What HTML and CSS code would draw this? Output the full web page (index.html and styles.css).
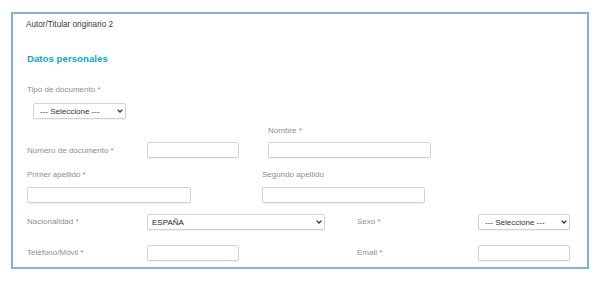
FILE: index.html
```html
<!DOCTYPE html>
<html lang="es">
<head>
<meta charset="utf-8">
<title>Autor/Titular originario 2</title>
<link rel="stylesheet" href="styles.css">
</head>
<body>
<div class="panel">
  <div class="panel-title">Autor/Titular originario 2</div>
  <h2 class="section-title">Datos personales</h2>

  <div class="tipo">
    <label class="lbl">Tipo de documento *</label>
    <div class="sel sel-tipo">
      <select><option>--- Seleccione ---</option></select>
      <svg class="chev" width="6" height="4" viewBox="0 0 6 4"><path d="M0.6 0.6 L3 3 L5.4 0.6" fill="none" stroke="#333" stroke-width="1.3"/></svg>
    </div>
  </div>

  <div class="row row-doc">
    <span></span>
    <span></span>
    <label class="lbl lbl-top">Nombre *</label>
    <label class="lbl lbl-mid">Número de documento *</label>
    <input class="inp w92" type="text">
    <input class="inp w163" type="text">
  </div>

  <div class="row row-ape">
    <label class="lbl lbl-top">Primer apellido *</label>
    <label class="lbl lbl-top">Segundo apellido</label>
    <input class="inp w164" type="text">
    <input class="inp w163" type="text">
  </div>

  <div class="row row-nac">
    <label class="lbl">Nacionalidad *</label>
    <div class="sel w178">
      <select class="sel-dark"><option>ESPAÑA</option></select>
      <svg class="chev" width="6" height="4" viewBox="0 0 6 4"><path d="M0.6 0.6 L3 3 L5.4 0.6" fill="none" stroke="#333" stroke-width="1.3"/></svg>
    </div>
    <label class="lbl">Sexo *</label>
    <div class="sel w92">
      <select class="sel-pad"><option>--- Seleccione ---</option></select>
      <svg class="chev" width="6" height="4" viewBox="0 0 6 4"><path d="M0.6 0.6 L3 3 L5.4 0.6" fill="none" stroke="#333" stroke-width="1.3"/></svg>
    </div>
  </div>

  <div class="row row-tel">
    <label class="lbl">Teléfono/Móvil *</label>
    <input class="inp w92" type="text">
    <label class="lbl">Email *</label>
    <input class="inp w92" type="text">
  </div>
</div>
</body>
</html>
```

FILE: styles.css
```css
html, body {
  margin: 0;
  padding: 0;
  background: #ffffff;
}

body {
  font-family: "Liberation Sans", Arial, sans-serif;
  font-size: 8px;
  color: #444;
}

.panel {
  margin: 12px 0 0 11px;
  width: 578px;
  height: 257px;
  box-sizing: border-box;
  border: 2px solid #7eb0e2;
  padding: 6px 14px 0 14px;
}

.panel-title {
  font-size: 8.2px;
  line-height: 10px;
  color: #3a3a3a;
  margin-left: -1px;
}

.section-title {
  margin: 23px 0 0 0;
  font-size: 9.6px;
  line-height: 12px;
  font-weight: bold;
  color: #0ea8c8;
  letter-spacing: 0.05px;
}

.lbl {
  display: block;
  font-size: 8px;
  line-height: 10px;
  color: #8e8e8e;
  white-space: nowrap;
}

.tipo {
  margin-top: 20px;
}

.sel {
  position: relative;
  height: 16px;
  box-sizing: border-box;
}

.sel select {
  -webkit-appearance: none;
  appearance: none;
  width: 100%;
  height: 16px;
  box-sizing: border-box;
  border: 1px solid #d2d2d2;
  border-radius: 2px;
  background: #fff;
  box-shadow: 0 1px 1px rgba(0,0,0,0.06);
  font-family: "Liberation Sans", Arial, sans-serif;
  font-size: 8px;
  color: #333;
  padding: 0 0 0 6px;
  margin: 0;
  outline: none;
}

.sel select.sel-dark {
  padding-left: 4px;
  color: #222;
}

.sel select.sel-pad {
  padding-left: 6px;
}

.chev {
  position: absolute;
  right: 3px;
  top: 6px;
}

.sel-tipo {
  width: 93px;
  margin: 8px 0 0 6px;
}

.inp {
  display: block;
  height: 16px;
  box-sizing: border-box;
  border: 1px solid #d2d2d2;
  border-radius: 2px;
  background: #fff;
  box-shadow: 0 1px 1px rgba(0,0,0,0.06);
  margin: 0;
  padding: 0 4px;
  outline: none;
}

.w92 { width: 92px; }
.w163 { width: 163px; }
.w164 { width: 164px; }
.w178 { width: 178px; }

.row {
  display: grid;
  align-items: center;
}

.row-doc {
  margin-top: 7px;
  grid-template-columns: 120px 121px 163px;
  grid-template-rows: 10px 16px;
  row-gap: 6px;
}

.row-doc .lbl-top {
  align-self: end;
}

.row-doc .lbl-mid {
  margin-top: 1px;
}

.row-ape {
  margin-top: 12px;
  grid-template-columns: 235px 163px;
  grid-template-rows: 10px 16px;
  row-gap: 7px;
}

.row-nac {
  margin-top: 11px;
  grid-template-columns: 120px 210px 121px 92px;
}

.row-tel {
  margin-top: 15px;
  grid-template-columns: 120px 210px 121px 92px;
}
```
